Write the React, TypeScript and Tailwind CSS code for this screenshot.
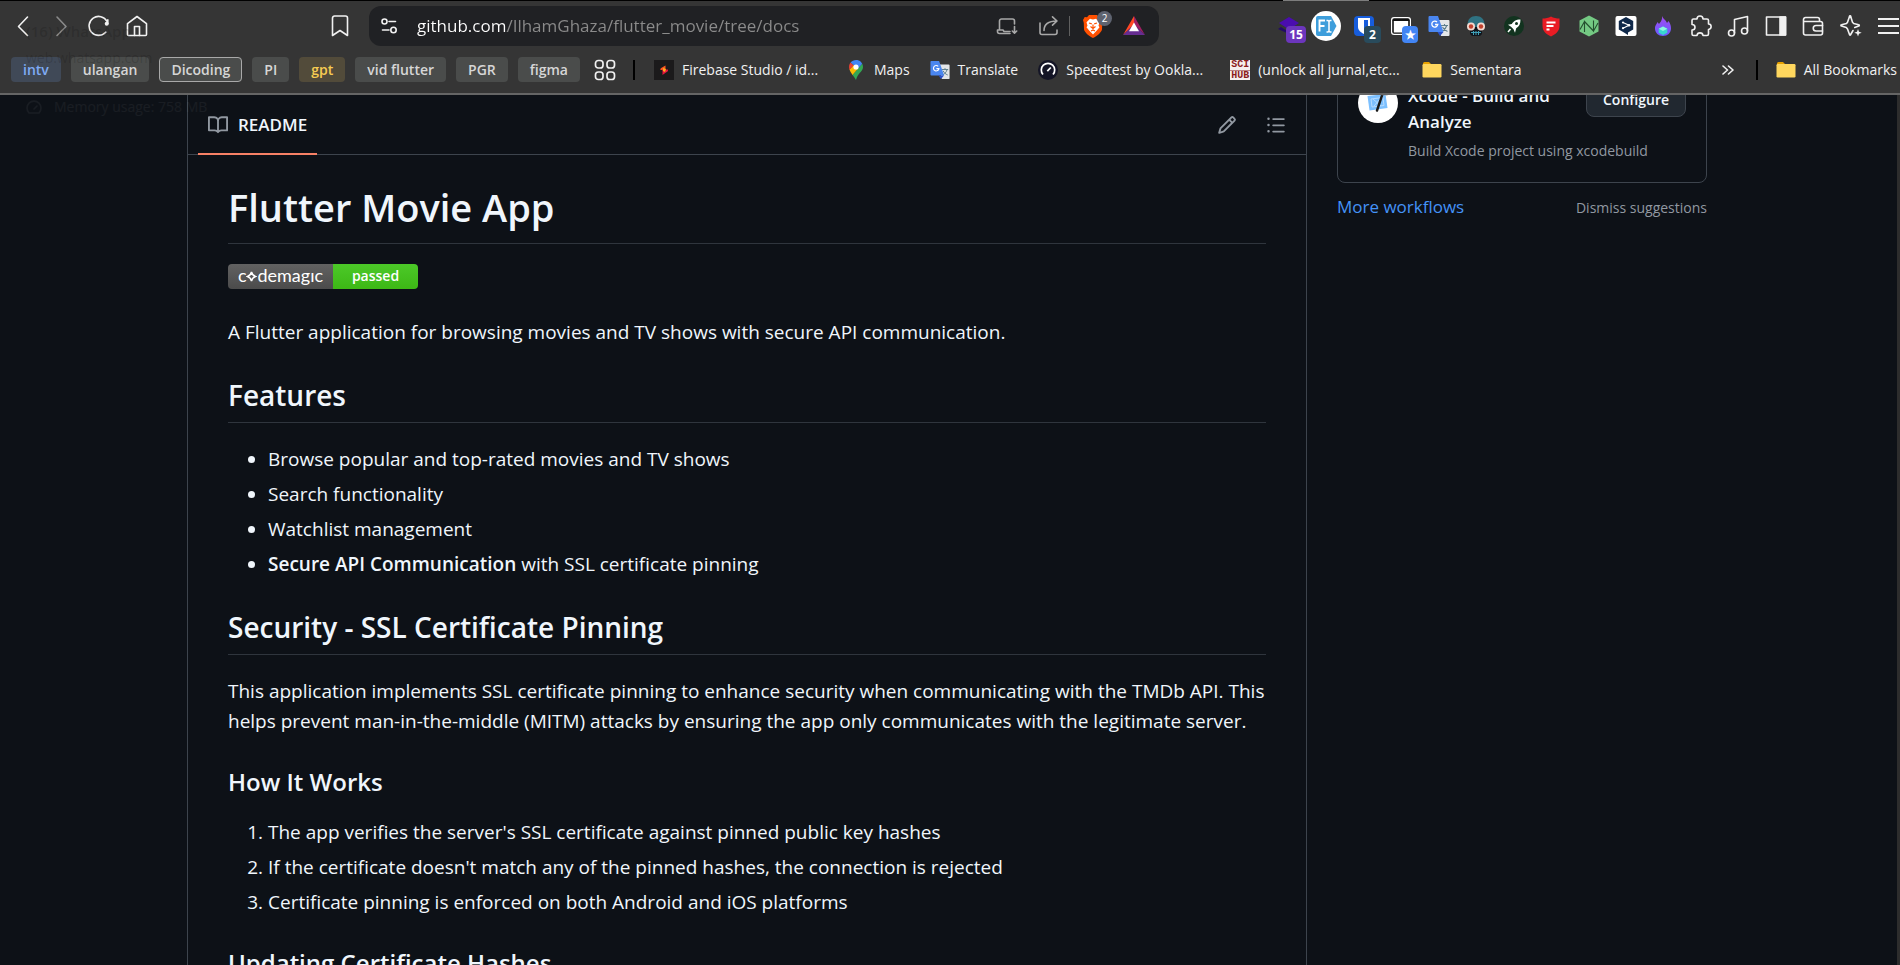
import React from "react";

type IconProps = { className?: string };

/* ---------- browser glyphs ---------- */

const stroke = {
  fill: "none",
  stroke: "currentColor",
  strokeWidth: 1.6,
  strokeLinecap: "round" as const,
  strokeLinejoin: "round" as const,
};

const Back = () => (
  <svg className="size-[22px]" viewBox="0 0 22 22" {...stroke}>
    <path d="M15.5 2 6.5 11.5l9 9" />
  </svg>
);
const Forward = () => (
  <svg className="size-[22px]" viewBox="0 0 22 22" {...stroke}>
    <path d="m7 2 9 9.500-9 9" />
  </svg>
);
const Reload = () => (
  <svg className="size-[22px]" viewBox="0 0 22 22" {...stroke}>
    <path d="M17.700 17.200A9.500 9.500 0 1 1 19 6.500" />
    <circle cx="18.700" cy="8.800" r="2" fill="currentColor" stroke="none" />
    <path d="M19.800 4.800v4" />
  </svg>
);
const Home = () => (
  <svg className="size-[22px]" viewBox="0 0 22 22" {...stroke}>
    <path d="M1.500 8.700 11 1.500l9.500 7.200v10.800a1 1 0 0 1-1 1h-17a1 1 0 0 1-1-1Z" />
    <path d="M8.500 20.500v-9h5v9" />
  </svg>
);
const Bookmark = () => (
  <svg className="h-[22px] w-[18px]" viewBox="0 0 18 22" {...stroke}>
    <path d="M1.500 3a2 2 0 0 1 2-2h11a2 2 0 0 1 2 2v17.500L9 15.500l-7.500 5Z" />
  </svg>
);
const Tune = () => (
  <svg className="size-[18px]" viewBox="0 0 18 18" {...stroke}>
    <circle cx="4.500" cy="4.500" r="2.500" />
    <path d="M9 4.500h6.500M2.500 13H9" />
    <circle cx="13.500" cy="13" r="2.700" />
  </svg>
);
const InstallApp = () => (
  <svg className="size-[22px]" viewBox="0 0 22 22" {...stroke}>
    <path d="M18.500 9V6a2 2 0 0 0-2-2h-11a2 2 0 0 0-2 2v9M1.500 15h5.500l1 1.500h6M1.500 15v1.500a2 2 0 0 0 2 2h10.500M18.500 11.500v6.500M16.300 16l2.200 2.200 2.200-2.200" />
  </svg>
);
const Share = () => (
  <svg className="size-[22px]" viewBox="0 0 22 22" {...stroke}>
    <path d="M2 8v9.500a2 2 0 0 0 2 2h13a2 2 0 0 0 2-2V15" />
    <path d="M6 15.500C6 9 10 6 19 6M14.500 1.800 19 6l-4.500 4.200" />
  </svg>
);
const Brave = () => (
  <svg className="h-[23px] w-5" viewBox="0 0 20 23">
    <path d="M6 0h8l2 2.200 2.300-.3L20 5l-.8 3L19 14.500c-.8 3-4.800 6.500-9 8.500-4.200-2-8.200-5.500-9-8.500L.8 8 0 5l1.700-3.100 2.300.3Z" fill="#ff5000" />
    <path d="m10 4.500 3-.7 3.500 3.500-1 3.500 1 1.500-2.700 3.200L10 19.500l-3.800-4L3.500 12.300l1-1.500-1-3.500L7 3.800Z" fill="#fff" />
    <path d="m6 8 2.800.8M14 8l-2.800.8M10 9.500V13m-2.500-1.500L10 13.500l2.500-2M8 16l2-1 2 1" stroke="#ff5000" strokeWidth="1.200" fill="none" />
  </svg>
);
const Bat = () => (
  <svg className="size-[22px]" viewBox="0 0 22 22">
    <path d="M11 1v8.500L0 20Z" fill="#ff4724" />
    <path d="m11 1 11 19-11-10.500Z" fill="#9e1f63" />
    <path d="M0 20 11 9.500 22 20Z" fill="#662d91" />
    <path d="m11 7.500 5 8.700H6Z" fill="#fff" />
  </svg>
);

/* ---------- extensions ---------- */

const Layers = () => (
  <svg className="size-[22px]" viewBox="0 0 22 22">
    <path d="m0 14 3-2 8 5 8-5v2l-8 5Z" fill="#220a66" />
    <path d="M1 8 11 2l10 6-10 6.500Z" fill="#4a0dae" />
  </svg>
);
const FontInspector = () => (
  <svg className="-m-1 size-[30px] shrink-0" viewBox="0 0 30 30">
    <circle cx="15" cy="15" r="15" fill="#fff" />
    <path d="M7 5h13l5.500 10L20 25H7a2 2 0 0 1-2-2V7a2 2 0 0 1 2-2Z" fill="#3e9edb" />
    <path d="M8.500 20.500v-11h5.500M8.500 15h5" stroke="#fff" strokeWidth="1.900" fill="none" />
    <path d="M15.500 9.500h1.500l1 1 1-1h1.500M15.500 21h1.500l1-1 1 1h1.500M18 10.500v9.500" stroke="#fff" strokeWidth="1.500" fill="none" />
  </svg>
);
const Bitwarden = () => (
  <svg className="size-[22px]" viewBox="0 0 22 22">
    <rect x="1" y="1" width="20" height="20" rx="4" fill="#175ddc" />
    <path d="M5 3h12v9c0 3.500-3 5.500-6 7-3-1.500-6-3.500-6-7Z" fill="#fff" />
    <path d="M11 5h4v7c0 2-2 3.500-4 4.500Z" fill="#175ddc" />
  </svg>
);
const WindowCard = () => (
  <svg className="size-[22px]" viewBox="0 0 22 22">
    <rect x="1" y="2" width="20" height="18" rx="3" fill="#fff" />
    <rect x="2.200" y="3.200" width="17.600" height="15.600" rx="2" fill="#111" />
    <rect x="3.800" y="6" width="14.400" height="11.500" fill="#fff" />
  </svg>
);
const TranslateIcon = ({ className = "size-[22px]" }: IconProps) => (
  <svg className={className} viewBox="0 0 22 22">
    <path d="M9 5h11.500a1 1 0 0 1 1 1v14a1 1 0 0 1-1 1H13Z" fill="#e4e6e8" />
    <path d="M13 10.500h7M16.500 9v1.500M18.800 10.500c-.8 3-2.500 4.500-4.800 6M14.500 12c1 2 2.500 3.500 5 4.500" stroke="#5f7f8c" strokeWidth="1.100" fill="none" />
    <path d="M1.500 1H10l5.500 16H1.500a1 1 0 0 1-1-1V2a1 1 0 0 1 1-1Z" fill="#4a86f0" />
    <path d="M9.500 17h6l-3.500 4Z" fill="#2b50c8" />
    <path d="M9 7a3 3 0 1 0 .8 2.500H7" stroke="#fff" strokeWidth="1.300" fill="none" />
  </svg>
);
const Mask = () => (
  <svg className="size-[22px]" viewBox="0 0 22 22">
    <path d="M2.500 10C2.500 4 6 1 11 1s8.500 3 8.500 9l-1.500 3H4Z" fill="#2f7282" />
    <path d="M5 12h12v7l-2 2H7l-2-2Z" fill="#10151c" />
    <path d="M6 17.500h10M8.500 16v4M11 16v4M13.500 16v4" stroke="#3fa0b8" strokeWidth="1" />
    <circle cx="6" cy="11.500" r="4" fill="#f4d9cf" />
    <circle cx="16" cy="11.500" r="4" fill="#f4d9cf" />
    <circle cx="6" cy="11.500" r="2.200" fill="#c2412d" />
    <circle cx="16" cy="11.500" r="2.200" fill="#c2412d" />
  </svg>
);
const Rocket = () => (
  <svg className="size-[22px]" viewBox="0 0 22 22">
    <circle cx="11" cy="11" r="10" fill="#12331f" />
    <path d="M17.500 4.500c-5 0-7 1.800-8.700 4.500l-3.800.8 3 2 2.500 2.500 1.500 3.500 1.200-4.500c3-1.800 4.300-4.300 4.300-8.800Z" fill="#fff" />
    <circle cx="13.500" cy="8.500" r="1.500" fill="#12331f" />
    <path d="m5 17 2.500-3" stroke="#fff" strokeWidth="1.500" />
  </svg>
);
const RedShield = () => (
  <svg className="size-[22px]" viewBox="0 0 22 22">
    <path d="M11 1.500c2.500 1.500 5.500 2 8.500 2V11c0 5-3.500 8-8.500 10.500C6 19 2.500 16 2.500 11V3.500c3 0 6-.5 8.500-2Z" fill="#e91c24" />
    <path d="M6.500 7.500h9M6.500 11h7M6.500 14.500h3" stroke="#fff" strokeWidth="1.800" />
  </svg>
);
const GreenHex = () => (
  <svg className="size-[22px]" viewBox="0 0 22 22">
    <path d="m11 .5 9.500 5v11l-9.500 5-9.500-5v-11Z" fill="#74c983" />
    <path d="M6.500 17V6.500l9 9.500V5.500M2 14.500l4.500-8M15.500 16l4.500-8" stroke="#24502f" strokeWidth="1.100" fill="none" />
  </svg>
);
const PromptCube = () => (
  <svg className="size-[22px]" viewBox="0 0 22 22">
    <rect x=".5" y="1" width="21" height="20" rx="2" fill="#fff" />
    <path d="m11 2 7.200 4v8.500L13 17.500V20l-4-2.500-5.200-3V6Z" fill="#10294a" />
    <path d="m8 7.500 6 2.700-6 3" stroke="#fff" strokeWidth="1.200" fill="none" />
    <circle cx="8" cy="7.500" r="1.100" fill="#fff" />
    <circle cx="14" cy="10.200" r="1.300" fill="#fff" />
    <circle cx="8" cy="13.200" r="1.100" fill="#fff" />
  </svg>
);
const Flame = () => (
  <svg className="size-[22px]" viewBox="0 0 22 22">
    <defs>
      <linearGradient id="flame" x1="0" y1="0" x2="0" y2="1">
        <stop offset="0" stopColor="#a24bf0" />
        <stop offset="1" stopColor="#6a5cff" />
      </linearGradient>
    </defs>
    <path d="M10 1c1 3 4 4 5 7l1.500-2C18.500 9 19 11 19 13.500c0 4.500-3.500 7.500-8 7.500s-8-3-8-7.500C3 10 5 9 5.500 7L7 9c1.500-2 3.500-4 3-8Z" fill="url(#flame)" />
    <path d="m11 11.500 4.300 2.200v4L11 20l-4.300-2.300v-4Z" fill="#38d6d0" />
    <path d="m11 11.500 4.300 2.200L11 16l-4.300-2.300Z" fill="#8ff5e2" />
  </svg>
);
const Puzzle = () => (
  <svg className="size-[22px]" viewBox="0 0 22 22" {...stroke}>
    <path d="M2 5.500A1.500 1.500 0 0 1 3.500 4H7c0-4 6-4 6 0h4a1.500 1.500 0 0 1 1.500 1.500V9c3.500 0 3.500 5 0 5.500v4.500a1.500 1.500 0 0 1-1.500 1.500h-4c-.3-3.500-5.700-3.500-6 0H3.500A1.500 1.500 0 0 1 2 19v-4c4 0 4-5.500 0-5.500Z" />
  </svg>
);
const Music = () => (
  <svg className="size-[22px]" viewBox="0 0 22 22" {...stroke}>
    <circle cx="4.500" cy="18" r="3" />
    <circle cx="17.500" cy="16" r="3" />
    <path d="M7.500 18V4.500L20.500 1.500V16" />
  </svg>
);
const SidePanel = () => (
  <svg className="size-[22px]" viewBox="0 0 22 22" {...stroke}>
    <rect x="1.500" y="2" width="19" height="18" />
    <path d="M15 2h5.500v18H15Z" fill="currentColor" />
  </svg>
);
const Wallet = () => (
  <svg className="size-[22px]" viewBox="0 0 22 22" {...stroke}>
    <path d="M17.500 6V4.500a2 2 0 0 0-2-2H3.500a2 2 0 0 0-2 2v13.500a2 2 0 0 0 2 2h15a2 2 0 0 0 2-2V8.500a2 2 0 0 0-2-2H1.800" />
    <path d="M20.500 10.500H14a2.700 2.700 0 0 0 0 5.500h6.500" />
  </svg>
);
const Sparkle = () => (
  <svg className="size-[22px]" viewBox="0 0 22 22" {...stroke}>
    <path d="M13 15.500 10.700 19.500a.6.6 0 0 1-1.200 0L7.500 14 6.300 12.500 1.500 11a.6.6 0 0 1 0-1.200l5-1.300L7.500 7.300 9.500 1.500a.6.6 0 0 1 1.200 0l1.800 5.800 1.200 1.200 5 1.300a.6.6 0 0 1 0 1.200l-4 1.500" />
    <path d="m18 14 1 2.700 2.700 1-2.700 1-1 2.700-1-2.700-2.700-1 2.700-1Z" fill="currentColor" stroke="none" />
  </svg>
);
const Menu = () => (
  <svg className="size-[22px]" viewBox="0 0 22 22" stroke="currentColor" strokeWidth="1.800">
    <path d="M1 4h21M1 11h21M1 18h21" />
  </svg>
);

/* ---------- bookmark icons ---------- */

const Grid = () => (
  <svg className="size-[22px]" viewBox="0 0 22 22" fill="none" stroke="currentColor" strokeWidth="1.700">
    <rect x="1.500" y="1.500" width="7.500" height="7.500" rx="2.800" />
    <rect x="13" y="1.500" width="7.500" height="7.500" rx="2.800" />
    <rect x="1.500" y="13" width="7.500" height="7.500" rx="2.800" />
    <rect x="13" y="13" width="7.500" height="7.500" rx="2.800" />
  </svg>
);
const Firebase = () => (
  <svg className="size-5 shrink-0" viewBox="0 0 20 20">
    <rect width="20" height="20" fill="#1b1a1b" />
    <path d="M11.500 5.500v4.500H6.500C6 8.500 7 8 8 7.500Z" fill="#ff5a1f" />
    <path d="M8.500 15v-4.500l-1-1h6.500c.5 2-1 2.500-2 3Z" fill="#e8173f" />
    <path d="m9 8 3 1-1 3-2-1Z" fill="#ffae1a" />
  </svg>
);
const MapsPin = () => (
  <svg className="size-5 shrink-0" viewBox="0 0 20 20">
    <path d="M10 20c.8-3 1.800-4.500 3.500-6.700C15.500 11 17 9.500 17 7c0-1.200-.3-2.200-.8-3.200L6.500 15c1.500 2 2.500 3 3.500 5Z" fill="#34a853" />
    <path d="M6.500 15 12.500 8 7.500 5 3.500 9.500C4.200 11.500 5.300 13 6.500 15Z" fill="#fbbc04" />
    <path d="M4.600 2.500 7.800 5.200 3.500 9.700C2.600 7 3 4.400 4.600 2.500Z" fill="#ea4335" />
    <path d="M4.600 2.500C6.800-.3 12-1 15 2l1.200 1.800L12.500 8 7.800 5.200Z" fill="#4285f4" />
    <circle cx="10" cy="7" r="2.600" fill="#fff" />
  </svg>
);
const Speedtest = () => (
  <svg className="size-5 shrink-0" viewBox="0 0 20 20">
    <circle cx="10" cy="10" r="10" fill="#141526" />
    <path d="M5 14.500A6.700 6.700 0 1 1 15 14.500" fill="none" stroke="#fff" strokeWidth="1.700" />
    <path d="m9.300 11.200 3.500-3.700" stroke="#fff" strokeWidth="1.700" />
  </svg>
);
const SciHub = () => (
  <span className="flex size-5 shrink-0 flex-col items-center justify-between bg-[#f5efee] font-['Liberation_Mono'] text-[10px] leading-[10px] font-bold text-[#8c1c1c]">
    <span>SCI</span>
    <span className="w-full border-t border-[#b98080] text-center leading-[9px]">HUB</span>
  </span>
);
const Folder = () => (
  <svg className="size-5 shrink-0" viewBox="0 0 20 20">
    <path d="M1 3.500A1.500 1.500 0 0 1 2.500 2H7l2 2h9v5H1Z" fill="#e8a200" />
    <rect x=".5" y="4" width="19" height="13.500" rx="1.200" fill="#ffd75e" />
  </svg>
);

/* ---------- repository icons ---------- */

const Octicon = ({ d, className }: { d: string; className: string }) => (
  <svg className={className} viewBox="0 0 16 16" fill="currentColor">
    <path d={d} />
  </svg>
);
const BOOK =
  "M0 1.750A.75.75 0 0 1 .75 1h4.253c1.227 0 2.317.59 3 1.501A3.743 3.743 0 0 1 11.006 1h4.245a.75.75 0 0 1 .75.75v10.500a.75.75 0 0 1-.75.75h-4.507a2.250 2.250 0 0 0-1.591.659l-.622.621a.75.75 0 0 1-1.060 0l-.622-.621A2.250 2.250 0 0 0 5.258 13H.75a.75.75 0 0 1-.75-.75Zm7.251 10.324.004-5.073-.002-2.253A2.250 2.250 0 0 0 5.003 2.500H1.500v9h3.757a3.750 3.750 0 0 1 1.994.574ZM8.755 4.750l-.004 7.322a3.752 3.752 0 0 1 1.992-.572H14.500v-9h-3.495a2.250 2.250 0 0 0-2.250 2.250Z";
const PENCIL =
  "M11.013 1.427a1.750 1.750 0 0 1 2.474 0l1.086 1.086a1.750 1.750 0 0 1 0 2.474l-8.610 8.610c-.21.21-.47.364-.756.445l-3.251.93a.75.75 0 0 1-.927-.928l.929-3.250c.081-.286.235-.547.445-.758l8.610-8.610Zm.176 4.823L9.750 4.810l-6.286 6.287a.253.253 0 0 0-.064.108l-.558 1.953 1.953-.558a.253.253 0 0 0 .108-.064Zm1.238-3.763a.25.25 0 0 0-.354 0L10.811 3.750l1.439 1.440 1.263-1.263a.25.25 0 0 0 0-.354Z";
const LIST =
  "M5.750 2.500h8.500a.75.75 0 0 1 0 1.500h-8.500a.75.75 0 0 1 0-1.500Zm0 5h8.500a.75.75 0 0 1 0 1.500h-8.500a.75.75 0 0 1 0-1.500Zm0 5h8.500a.75.75 0 0 1 0 1.500h-8.500a.75.75 0 0 1 0-1.500ZM2 14a1 1 0 1 1 0-2 1 1 0 0 1 0 2Zm1-6a1 1 0 1 1-2 0 1 1 0 0 1 2 0ZM2 4a1 1 0 1 1 0-2 1 1 0 0 1 0 2Z";

/* ---------- browser chrome ---------- */

const GREY_PILL = "bg-[#4a4c4b] text-[#d6d6d6]";
const PILLS: [string, string][] = [
  ["intv", "bg-[#404957] text-[#7fabf5]"],
  ["ulangan", GREY_PILL],
  ["Dicoding", "bg-[#4a4c4b] text-[#d6d6d6] outline-1 -outline-offset-1 outline-[#a9a9a9]"],
  ["PI", GREY_PILL],
  ["gpt", "bg-[#524b3a] text-[#f6cb52]"],
  ["vid flutter", GREY_PILL],
  ["PGR", GREY_PILL],
  ["figma", GREY_PILL],
];

const LINKS = [
  { text: "Firebase Studio / id...", icon: <Firebase />, box: "w-[172px]" },
  { text: "Maps", icon: <MapsPin />, box: "" },
  { text: "Translate", icon: <TranslateIcon className="size-5 shrink-0" />, box: "" },
  { text: "Speedtest by Ookla...", icon: <Speedtest />, box: "w-[172px]" },
  { text: "(unlock all jurnal,etc...", icon: <SciHub />, box: "w-[172px]" },
  { text: "Sementara", icon: <Folder />, box: "" },
];

const EXTENSIONS: { label: string; icon: React.ReactNode; badge?: string; tone?: string }[] = [
  { label: "Layers", icon: <Layers />, badge: "15", tone: "w-5 bg-[#6c36bd]" },
  { label: "Font inspector", icon: <FontInspector /> },
  { label: "Password manager", icon: <Bitwarden />, badge: "2", tone: "w-[17px] bg-[#294b5c]" },
  { label: "Tab window", icon: <WindowCard />, badge: "★", tone: "w-4 bg-[#4285f4]" },
  { label: "Translate page", icon: <TranslateIcon /> },
  { label: "Mask", icon: <Mask /> },
  { label: "Rocket", icon: <Rocket /> },
  { label: "Shield", icon: <RedShield /> },
  { label: "Network", icon: <GreenHex /> },
  { label: "Prompt", icon: <PromptCube /> },
  { label: "Flame", icon: <Flame /> },
  { label: "Extensions", icon: <Puzzle /> },
  { label: "Media", icon: <Music /> },
  { label: "Side panel", icon: <SidePanel /> },
  { label: "Wallet", icon: <Wallet /> },
  { label: "Assistant", icon: <Sparkle /> },
  { label: "Menu", icon: <Menu /> },
];

function Toolbar() {
  return (
    <div className="flex h-10 items-center pr-[1px] pl-3">
      <nav className="flex w-[136px] items-center justify-between">
        <button aria-label="Back"><Back /></button>
        <button aria-label="Forward" className="text-[#8a8a8a]"><Forward /></button>
        <button aria-label="Reload"><Reload /></button>
        <button aria-label="Home"><Home /></button>
      </nav>
      <button aria-label="Bookmark this page" className="ml-auto"><Bookmark /></button>
      <div className="ml-5 flex h-10 w-[790px] min-w-0 items-center rounded-xl bg-[#202124] pr-[14px] pl-[11px]">
        <button aria-label="Site information"><Tune /></button>
        <input
          aria-label="Address"
          defaultValue="github.com/IlhamGhaza/flutter_movie/tree/docs"
          className="ml-[19px] min-w-0 flex-1 bg-[linear-gradient(to_right,#ffffff_90px,#8b8b8b_90px)] bg-clip-text text-[17px] leading-8 text-transparent outline-none"
        />
        <div className="flex items-center text-[#a8a8a8]">
          <button aria-label="Install"><InstallApp /></button>
          <button aria-label="Share" className="ml-5"><Share /></button>
          <span className="mx-[9px] h-5 w-px bg-[#606060]" />
          <button aria-label="Shields" className="relative ml-1">
            <Brave />
            <span className="absolute -top-1 -right-[9px] flex size-[15px] items-center justify-center rounded-full bg-[#5e6370] text-[10px] leading-none text-white">2</span>
          </button>
          <button aria-label="Rewards" className="ml-5"><Bat /></button>
        </div>
      </div>
      <div className="ml-[119px] flex w-[621px] shrink-0 items-center justify-between">
        {EXTENSIONS.map((e) => (
          <button key={e.label} aria-label={e.label} className="relative flex size-[22px] items-center justify-center">
            {e.icon}
            {e.badge && (
              <span className={`absolute -right-[6px] -bottom-[6px] flex h-[17px] items-center justify-center rounded text-[12px] leading-none font-bold text-white ${e.tone}`}>
                {e.badge}
              </span>
            )}
          </button>
        ))}
      </div>
    </div>
  );
}

function BookmarksBar() {
  return (
    <div className="mt-[11px] flex h-[25px] items-center overflow-hidden pl-[11px] text-[14px] leading-[25px] whitespace-nowrap text-[#f1f1f1]">
      <div className="flex gap-[10px] font-semibold">
        {PILLS.map(([text, tone]) => (
          <button key={text} className={`h-[25px] rounded px-3 leading-[24px] ${tone}`}>
            {text}
          </button>
        ))}
      </div>
      <button aria-label="Tab groups" className="ml-[14px]"><Grid /></button>
      <span className="mr-[19px] ml-[17px] h-5 w-[2px] bg-black" />
      <div className="flex gap-5">
        {LINKS.map((l) => (
          <a key={l.text} href="#" className={`flex items-center gap-2 ${l.box}`}>
            {l.icon}
            {l.text}
          </a>
        ))}
      </div>
      <button aria-label="More bookmarks" className="ml-auto">
        <svg className="h-4 w-3" viewBox="0 0 12 16" {...stroke}>
          <path d="m1 4 4.500 4L1 12M6.500 4 11 8l-4.500 4" />
        </svg>
      </button>
      <span className="mr-[18px] ml-[22px] h-5 w-[2px] bg-black" />
      <a href="#" className="flex items-center gap-2 pr-[3px]">
        <Folder />
        All Bookmarks
      </a>
    </div>
  );
}

/* Tab preview card in the last frames of its fade-out. */
function FadingTabCard() {
  return (
    <div aria-hidden="true" className="pointer-events-none absolute top-[19px] left-[26px] text-[14px] text-black/15">
      <div className="text-[15px] leading-6 font-semibold">(16) WhatsApp</div>
      <div className="mt-[3px] leading-6">web.whatsapp.com</div>
      <div className="mt-[25px] flex items-center gap-3 leading-6 text-white/5">
        <svg className="size-4" viewBox="0 0 16 16" {...stroke}>
          <path d="M3 14a7 7 0 1 1 10 0ZM8 10l3-3" />
        </svg>
        Memory usage: 758 MB
      </div>
    </div>
  );
}

/* ---------- page ---------- */

const H2 = ({ children }: { children: React.ReactNode }) => (
  <h2 className="mt-[29px] mb-[21px] border-b border-[#2f353d] pb-2 text-[28px] leading-[38px] font-semibold">{children}</h2>
);
const H3 = ({ children }: { children: React.ReactNode }) => (
  <h3 className="mt-[30px] mb-5 text-2xl leading-[31px] font-semibold">{children}</h3>
);

function Readme() {
  return (
    <section className="w-[1120px] min-w-0 border-x border-[#3d444d]">
      <div className="flex h-[60px] items-stretch border-b border-[#3d444d] pr-5 pl-[10px] text-[#9198a1]">
        <a href="#" className="-mb-px flex items-center gap-[10px] border-b-2 border-[#f78166] px-[10px] pt-[2px] text-[17px] font-semibold text-[#f0f6fc]">
          <Octicon d={BOOK} className="size-5 text-[#9198a1]" />
          README
        </a>
        <div className="ml-auto flex items-center gap-[29px]">
          <button aria-label="Edit file"><Octicon d={PENCIL} className="size-5" /></button>
          <button aria-label="Outline"><Octicon d={LIST} className="size-5" /></button>
        </div>
      </div>
      <article className="px-10 pt-[27px] text-[19px] leading-[30px]">
        <h1 className="mb-5 border-b border-[#2f353d] pb-[11px] text-[38px] leading-[50px] font-semibold">Flutter Movie App</h1>
        <a href="#" className="flex h-[25px] w-[190px] overflow-hidden rounded text-white">
          <span className="flex w-[105px] items-center justify-center bg-linear-to-b from-[#626262] to-[#4b4b4b] pb-[2px] font-['Lato'] text-[18px] leading-[23px]">
            c
            <svg className="h-3 w-[11px]" viewBox="0 0 11 12" fill="none" stroke="currentColor" strokeWidth="1.500">
              <path d="M5.500 2c.5 2.500 1.500 3.500 4 4.500-2.500 1-3.500 2-4 4.500-.5-2.500-1.500-3.500-4-4.500 2.500-1 3.500-2 4-4.500Z" />
            </svg>
            demagıc
          </span>
          <span className="flex-1 bg-linear-to-b from-[#4cc928] to-[#3db815] text-center text-[14px] leading-[23px] font-semibold">passed</span>
        </a>
        <p className="mt-7">A Flutter application for browsing movies and TV shows with secure API communication.</p>
        <H2>Features</H2>
        <ul className="flex list-disc flex-col gap-[5px] pl-10">
          <li>Browse popular and top-rated movies and TV shows</li>
          <li>Search functionality</li>
          <li>Watchlist management</li>
          <li><strong className="font-semibold">Secure API Communication</strong> with SSL certificate pinning</li>
        </ul>
        <H2>Security - SSL Certificate Pinning</H2>
        <p>
          This application implements SSL certificate pinning to enhance security when communicating with the TMDb API. This
          helps prevent man-in-the-middle (MITM) attacks by ensuring the app only communicates with the legitimate server.
        </p>
        <H3>How It Works</H3>
        <ol className="flex list-decimal flex-col gap-[5px] pl-10">
          <li>The app verifies the server's SSL certificate against pinned public key hashes</li>
          <li>If the certificate doesn't match any of the pinned hashes, the connection is rejected</li>
          <li>Certificate pinning is enforced on both Android and iOS platforms</li>
        </ol>
        <H3>Updating Certificate Hashes</H3>
      </article>
    </section>
  );
}

function Workflows() {
  return (
    <aside className="-mt-[33px] w-[370px] shrink-0">
      <div className="flex items-start rounded-lg border border-[#3d444d] p-5">
        <span className="mr-[10px] flex size-10 shrink-0 items-center justify-center rounded-full bg-white">
          <svg className="size-6" viewBox="0 0 24 24">
            <path d="m1.500 5 18-2 2 14-18 2.500Z" fill="#7cc0ff" />
            <path d="m5 8 12-1.500 1 8-12 1.500ZM7 8l8 7M15 7l-7 8" stroke="#b7dcff" strokeWidth="1" fill="none" />
            <path d="M16.500 3 11 19.500" stroke="#1a1a1a" strokeWidth="2.400" strokeLinecap="round" />
            <path d="m13.500 1.500 8 .5v2.500l-7.500-.5Z" fill="#9a9a9a" />
          </svg>
        </span>
        <div className="min-w-0 flex-1">
          <div className="flex items-start justify-between">
            <h3 className="w-[160px] text-[17px] leading-[26px] font-semibold">Xcode - Build and Analyze</h3>
            <button className="h-[34px] w-[100px] rounded-lg border border-[#3d444d] bg-[#212830] pb-[2px] text-[14px] font-semibold">Configure</button>
          </div>
          <p className="mt-[5px] text-[14px] leading-[22px] whitespace-nowrap text-[#9198a1]">Build Xcode project using xcodebuild</p>
        </div>
      </div>
      <div className="mt-[10px] flex items-baseline justify-between leading-7">
        <a href="#" className="text-[17px] text-[#4493f8]">More workflows</a>
        <button className="text-[14px] text-[#9198a1]">Dismiss suggestions</button>
      </div>
    </aside>
  );
}

export default function App() {
  return (
    <div className="relative flex h-screen flex-col overflow-hidden bg-[#0d1117] font-['Open_Sans',sans-serif] text-[#f0f6fc]">
      <header className="relative z-10 shrink-0 border-b-2 border-[#656565] bg-[#353535] pb-[11px] text-[#f1f1f1]">
        <div className="mb-[5px] flex h-px justify-end bg-black">
          <span className="mr-[531px] w-[86px] bg-[#7d7d7d]" />
        </div>
        <Toolbar />
        <BookmarksBar />
      </header>
      <main className="flex min-h-0 flex-1">
        <div className="min-w-0 flex-1 overflow-hidden pr-[3px]">
          <div className="mx-auto flex min-h-full max-w-[1520px] items-stretch gap-[30px]">
            <Readme />
            <Workflows />
          </div>
        </div>
        <div className="w-[3px] bg-[#2d2d2d]" />
      </main>
      <div className="absolute inset-x-0 top-0 z-20">
        <FadingTabCard />
      </div>
    </div>
  );
}
